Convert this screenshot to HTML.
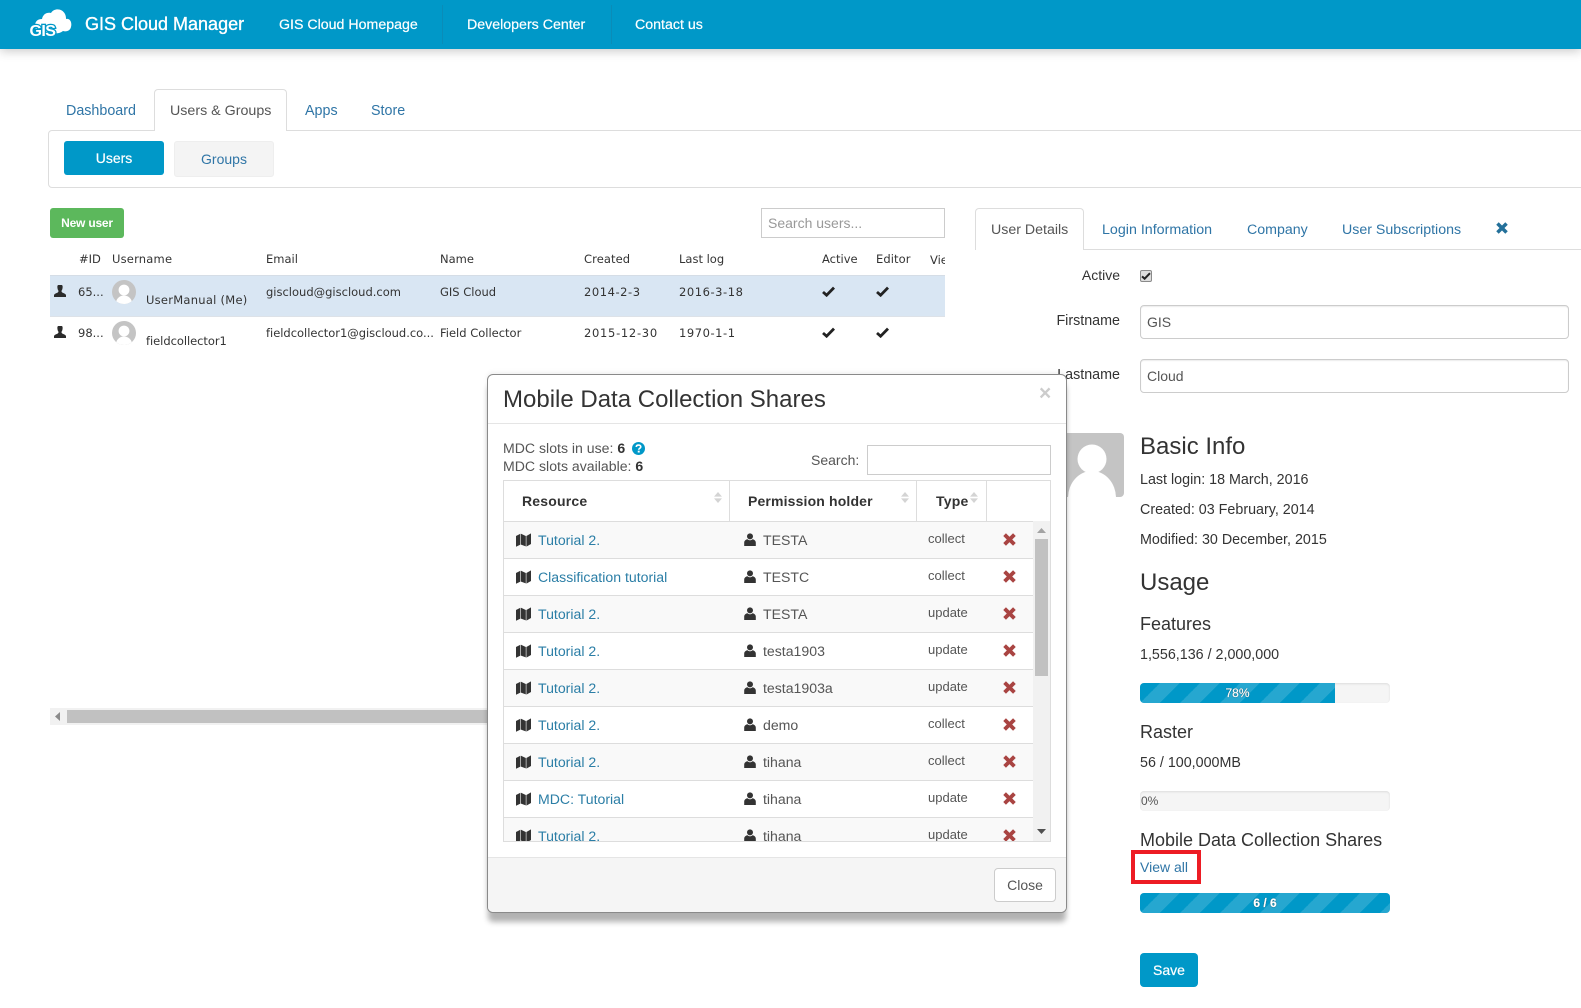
<!DOCTYPE html>
<html><head><meta charset="utf-8"><title>GIS Cloud Manager</title>
<style>
*{box-sizing:border-box}
html,body{margin:0;padding:0;background:#fff}
body{position:relative;width:1581px;height:1008px;overflow:hidden;font:14px/20px "Liberation Sans",sans-serif;color:#333}
.a{position:absolute}
.t{position:absolute;white-space:nowrap;line-height:20px}
.l{color:#2f75a6}
.n{color:#fff;font-size:14.2px;top:15px;-webkit-text-stroke:.2px #fff}
.d{font-family:"DejaVu Sans",sans-serif;font-size:11.5px;color:#333}
.v{letter-spacing:.55px}
.h{font-size:18px}
.p{font-size:14.3px}
.bar{position:absolute;left:1140px;width:250px;height:20px;background:#f5f5f5;border-radius:4px;overflow:hidden;box-shadow:inset 0 1px 2px rgba(0,0,0,.1)}
.fill{height:100%;background-color:#0098c8;background-image:linear-gradient(-45deg,rgba(255,255,255,.15) 25%,transparent 25%,transparent 50%,rgba(255,255,255,.15) 50%,rgba(255,255,255,.15) 75%,transparent 75%,transparent);background-size:40px 40px;color:#fff;text-align:center;font-size:12px;line-height:20px;text-shadow:0 0 1px #000;-webkit-text-stroke:.2px #fff}
.inp{position:absolute;background:#fff;border:1px solid #ccc;border-radius:4px;box-shadow:inset 0 1px 1px rgba(0,0,0,.08);padding-left:6px;color:#555;line-height:32px}
.row{position:absolute;left:0;width:530px;height:37px;border-top:1px solid #ddd}
.row a{position:absolute;left:34px;top:8px;color:#2b7ea6;white-space:nowrap;font-size:14.1px}
.row b{position:absolute;left:259px;top:8px;font-weight:normal;color:#555;white-space:nowrap;font-size:14.1px}
.row i{position:absolute;left:424px;top:7px;font-style:normal;font-size:13px;color:#555;white-space:nowrap}
.row svg{position:absolute}
.s1{left:12px;top:11px}.s2{left:240px;top:11px}.s3{left:499px;top:11px}
.o{background:#f9f9f9}
.th{position:absolute;top:7px;font-weight:bold;letter-spacing:.2px;white-space:nowrap;line-height:26px;font-size:14px}
</style></head><body>
<svg width="0" height="0" style="position:absolute"><defs>
<symbol id="usr" viewBox="0 0 12 13"><circle cx="6" cy="3.4" r="3"/><path d="M0.2 13V9.6C.2 7.6 2 6.3 3.6 6.2 4.3 6.9 5.1 7.2 6 7.2S7.7 6.9 8.4 6.2C10 6.3 11.8 7.6 11.8 9.6V13Z"/></symbol>
<symbol id="gly" viewBox="0 0 12 12"><path d="M4.4 0H7.6C8.4 0 8.8 1 8.6 2.6 8.4 4.4 8 5 7.6 5.6 7.4 6.4 7.6 7 8.4 7.6 10 8.4 11.6 8.8 12 10V12H0V10C.4 8.8 2 8.4 3.6 7.6 4.4 7 4.6 6.4 4.4 5.6 4 5 3.6 4.4 3.4 2.6 3.2 1 3.6 0 4.4 0Z"/></symbol>
<symbol id="map" viewBox="0 0 15 14"><path fill="#333" d="M0 3 4.4 .8V11.6L0 13.8ZM5 .8 9.8 3V13.4L5 11.6ZM10.4 3 15 .4V11L10.4 13.6Z"/></symbol>
<symbol id="x" viewBox="0 0 13 13"><path d="M1.6 1.6 11.4 11.4M11.4 1.6 1.6 11.4" fill="none" stroke="#a94442" stroke-width="3.8"/></symbol>
<symbol id="chk" viewBox="0 0 13 11"><path d="M1 6 4.6 9.2 12 1.6" fill="none" stroke="#222" stroke-width="2.8"/></symbol>
<symbol id="srt" viewBox="0 0 8 11"><path d="M4 0 8 4.6H0ZM4 11 0 6.4H8Z" fill="#d4d4d4"/></symbol>
</defs></svg>

<!-- Header -->
<div class="a" style="left:0;top:0;width:1581px;height:49px;background:#0098c8;box-shadow:0 2px 10px rgba(0,0,0,.22)"></div>
<svg class="a" style="left:28px;top:4px" width="46" height="36" viewBox="0 0 46 36">
<path fill="#fff" d="M7 22C7 17 10 15 14 15 15 10 19 8 23 9 26 4 34 4 37 10 38 12 38 14 38 15 43 14 44 20 43 23 42 27 38 28 35 27 31 30 26 30 22 28 15 29 7 28 7 22Z"/>
<text x="1.5" y="32" font-family="Liberation Sans" font-weight="bold" font-size="16" fill="#fff" stroke="#0098c8" stroke-width="2.6" paint-order="stroke" letter-spacing="-.6">GIS</text>
</svg>
<div class="t" style="left:85px;top:14px;color:#fff;font-size:18px;-webkit-text-stroke:.35px #fff">GIS Cloud Manager</div>
<div class="t n" style="left:279px">GIS Cloud Homepage</div>
<div class="a" style="left:442px;top:5px;width:1px;height:39px;background:#0a8cb8"></div>
<div class="t n" style="left:467px">Developers Center</div>
<div class="a" style="left:611px;top:5px;width:1px;height:39px;background:#0a8cb8"></div>
<div class="t n" style="left:635px">Contact us</div>

<!-- Main tabs -->
<div class="a" style="left:48px;top:130px;width:1560px;height:58px;border:1px solid #ddd;border-radius:4px"></div>
<div class="a" style="left:154px;top:89px;width:133px;height:42px;background:#fff;border:1px solid #ddd;border-bottom:0;border-radius:4px 4px 0 0"></div>
<div class="t l" style="left:66px;top:101px;font-size:14.3px">Dashboard</div>
<div class="t" style="left:170px;top:101px;font-size:14.25px;color:#555">Users &amp; Groups</div>
<div class="t l" style="left:305px;top:101px;font-size:14.3px">Apps</div>
<div class="t l" style="left:371px;top:101px;font-size:14.3px">Store</div>
<div class="a" style="left:64px;top:141px;width:100px;height:34px;background:#0098c8;border-radius:3px;color:#fff;text-align:center;line-height:34px;-webkit-text-stroke:.2px #fff">Users</div>
<div class="a" style="left:174px;top:141px;width:100px;height:36px;background:#f4f4f4;border:1px solid #eee;border-radius:3px;color:#2f75a6;text-align:center;line-height:35px">Groups</div>

<!-- Users table -->
<div class="a" style="left:50px;top:208px;width:74px;height:30px;background:#5cb85c;border-radius:3px;color:#fff;font-size:12px;font-weight:bold;letter-spacing:-.2px;text-align:center;line-height:30px">New user</div>
<div class="a" style="left:761px;top:208px;width:184px;height:30px;border:1px solid #ccc;color:#999;padding-left:6px;line-height:28px">Search users...</div>
<div class="t d" style="left:79px;top:249px">#ID</div>
<div class="t d" style="left:112px;top:249px;letter-spacing:.2px">Username</div>
<div class="t d" style="left:266px;top:249px">Email</div>
<div class="t d" style="left:440px;top:249px">Name</div>
<div class="t d" style="left:584px;top:249px;letter-spacing:.1px">Created</div>
<div class="t d" style="left:679px;top:249px">Last log</div>
<div class="t d" style="left:822px;top:249px">Active</div>
<div class="t d" style="left:876px;top:249px;letter-spacing:.1px">Editor</div>
<div class="a" style="left:930px;top:249px;width:15px;overflow:hidden"><span class="d" style="line-height:20px">View</span></div>

<div class="a" style="left:50px;top:275px;width:895px;height:42px;background:#d9e6f3;border-top:1px solid #d5dde6;border-bottom:1px solid #dde2e8"></div>

<svg class="a" style="left:54px;top:285px" width="12" height="12" fill="#2b2b2b"><use href="#gly"/></svg>
<div class="t d" style="left:78px;top:282px">65...</div>
<svg class="a" style="left:112px;top:280px" width="24" height="24" viewBox="0 0 24 24"><defs><clipPath id="c1"><circle cx="12" cy="12" r="12"/></clipPath></defs><circle cx="12" cy="12" r="12" fill="#c4c4c4"/><g clip-path="url(#c1)" fill="#fff"><circle cx="12" cy="10" r="5.4"/><ellipse cx="12" cy="23" rx="8" ry="7.5"/></g></svg>
<div class="t d" style="left:146px;top:290px;letter-spacing:.26px">UserManual (Me)</div>
<div class="t d" style="left:266px;top:282px">giscloud@giscloud.com</div>
<div class="t d" style="left:440px;top:282px">GIS Cloud</div>
<div class="t d v" style="left:584px;top:282px">2014-2-3</div>
<div class="t d v" style="left:679px;top:282px">2016-3-18</div>
<svg class="a" style="left:822px;top:286px" width="13" height="11"><use href="#chk"/></svg>
<svg class="a" style="left:876px;top:286px" width="13" height="11"><use href="#chk"/></svg>

<svg class="a" style="left:54px;top:326px" width="12" height="12" fill="#2b2b2b"><use href="#gly"/></svg>
<div class="t d" style="left:78px;top:323px">98...</div>
<svg class="a" style="left:112px;top:321px" width="24" height="24" viewBox="0 0 24 24"><defs><clipPath id="c2"><circle cx="12" cy="12" r="12"/></clipPath></defs><circle cx="12" cy="12" r="12" fill="#c4c4c4"/><g clip-path="url(#c2)" fill="#fff"><circle cx="12" cy="10" r="5.4"/><ellipse cx="12" cy="23" rx="8" ry="7.5"/></g></svg>
<div class="t d" style="left:146px;top:331px;letter-spacing:-.05px">fieldcollector1</div>
<div class="t d" style="left:266px;top:323px;letter-spacing:-.02px">fieldcollector1@giscloud.co...</div>
<div class="t d" style="left:440px;top:323px">Field Collector</div>
<div class="t d v" style="left:584px;top:323px;letter-spacing:.7px">2015-12-30</div>
<div class="t d v" style="left:679px;top:323px">1970-1-1</div>
<svg class="a" style="left:822px;top:327px" width="13" height="11"><use href="#chk"/></svg>
<svg class="a" style="left:876px;top:327px" width="13" height="11"><use href="#chk"/></svg>

<!-- Horizontal scrollbar -->
<div class="a" style="left:50px;top:708px;width:895px;height:17px;background:#f1f1f1"></div>
<div class="a" style="left:67px;top:710px;width:878px;height:13px;background:#c1c1c1"></div>
<svg class="a" style="left:55px;top:712px" width="6" height="9"><path d="M5 0V9L0 4.5Z" fill="#8a8a8a"/></svg>

<!-- Right panel -->
<div class="a" style="left:975px;top:249px;width:606px;height:1px;background:#ddd"></div>
<div class="a" style="left:975px;top:208px;width:109px;height:42px;background:#fff;border:1px solid #ddd;border-bottom:0;border-radius:4px 4px 0 0"></div>
<div class="t" style="left:991px;top:220px;color:#555;font-size:14.2px">User Details</div>
<div class="t l" style="left:1102px;top:220px;font-size:14.25px">Login Information</div>
<div class="t l" style="left:1247px;top:220px;font-size:14.2px">Company</div>
<div class="t l" style="left:1342px;top:220px;font-size:14.2px">User Subscriptions</div>
<svg class="a" style="left:1496px;top:222px" width="12" height="12" viewBox="0 0 13 13"><path d="M1.6 1.6 11.4 11.4M11.4 1.6 1.6 11.4" fill="none" stroke="#23709a" stroke-width="3.8"/></svg>

<div class="t" style="right:461px;top:265px">Active</div>
<div class="a" style="left:1140px;top:270px;width:12px;height:12px;background:#ddd;border:1px solid #8a8a8a;border-radius:2px"></div>
<svg class="a" style="left:1141px;top:272px" width="10" height="8" viewBox="0 0 13 11"><use href="#chk"/></svg>
<div class="t p" style="right:461px;top:311px">Firstname</div>
<div class="inp" style="left:1140px;top:305px;width:429px;height:34px">GIS</div>
<div class="t p" style="right:461px;top:365px">Lastname</div>
<div class="inp" style="left:1140px;top:359px;width:429px;height:34px">Cloud</div>

<svg class="a" style="left:1060px;top:433px" width="64" height="64" viewBox="0 0 64 64"><defs><clipPath id="c3"><rect width="64" height="64" rx="4"/></clipPath></defs><rect width="64" height="64" rx="4" fill="#c4c4c4"/><g clip-path="url(#c3)" fill="#fff"><circle cx="32" cy="26" r="14.5"/><ellipse cx="32" cy="65" rx="24" ry="27"/></g></svg>

<div class="t" style="left:1140px;top:437px;font-size:24px">Basic Info</div>
<div class="t p" style="left:1140px;top:470px">Last login: 18 March, 2016</div>
<div class="t p" style="left:1140px;top:500px">Created: 03 February, 2014</div>
<div class="t p" style="left:1140px;top:530px">Modified: 30 December, 2015</div>
<div class="t" style="left:1140px;top:573px;font-size:24px">Usage</div>
<div class="t h" style="left:1140px;top:614px">Features</div>
<div class="t p" style="left:1140px;top:645px">1,556,136 / 2,000,000</div>
<div class="bar" style="top:683px"><div class="fill" style="width:195px">78%</div></div>
<div class="t h" style="left:1140px;top:722px">Raster</div>
<div class="t p" style="left:1140px;top:753px">56 / 100,000MB</div>
<div class="bar" style="top:791px"><div class="a" style="left:1px;top:0;font-size:12px;color:#555">0%</div></div>
<div class="t h" style="left:1140px;top:830px">Mobile Data Collection Shares</div>
<div class="a" style="left:1131px;top:850px;width:70px;height:34px;border:4px solid #ed1c24"></div>
<div class="t l" style="left:1140px;top:857px">View all</div>
<div class="bar" style="top:893px"><div class="fill" style="width:100%;font-weight:bold">6 / 6</div></div>
<div class="a" style="left:1140px;top:953px;width:58px;height:34px;background:#0098c8;border-radius:4px;color:#fff;text-align:center;line-height:34px;-webkit-text-stroke:.2px #fff">Save</div>

<!-- Modal -->
<div class="a" style="left:487px;top:374px;width:580px;height:539px;background:#fff;border:1px solid #8a8a8a;border-radius:6px;box-shadow:0 10px 6px -1px rgba(0,0,0,.3),0 -2px 5px rgba(0,0,0,.06);overflow:hidden">
  <div class="a" style="left:0;top:482px;width:578px;height:55px;background:#f5f5f5;border-top:1px solid #e5e5e5"></div>
  <div class="a" style="left:0;top:48px;width:578px;height:1px;background:#e5e5e5"></div>
</div>
<div class="t" style="left:503px;top:390px;font-size:24px;line-height:20px">Mobile Data Collection Shares</div>
<div class="t" style="left:1039px;top:384px;font-size:21px;font-weight:bold;color:#ccc">×</div>
<div class="t" style="left:503px;top:438px;color:#555;font-size:14.1px">MDC slots in use: <b style="color:#333">6</b></div>
<svg class="a" style="left:632px;top:442px" width="13" height="13" viewBox="0 0 12 12"><circle cx="6" cy="6" r="6" fill="#0098c8"/><path d="M3.9 4.6C4 3.4 4.9 2.8 6 2.8 7.2 2.8 8.1 3.5 8.1 4.5 8.1 5.9 6.2 5.9 6.2 7.2" fill="none" stroke="#fff" stroke-width="1.5"/><rect x="5.3" y="8" width="1.8" height="1.7" fill="#fff"/></svg>
<div class="t" style="left:503px;top:456px;color:#555;font-size:14.1px">MDC slots available: <b style="color:#333">6</b></div>
<div class="t" style="left:811px;top:450px;color:#555">Search:</div>
<div class="a" style="left:867px;top:445px;width:184px;height:30px;border:1px solid #ccc"></div>

<!-- Modal table -->
<div class="a" style="left:503px;top:480px;width:548px;height:362px;border:1px solid #ddd;overflow:hidden;background:#fff">
  <div class="th" style="left:18px">Resource</div>
  <div class="th" style="left:244px;letter-spacing:.15px">Permission holder</div>
  <div class="th" style="left:432px">Type</div>
  <div class="a" style="left:225px;top:0;width:1px;height:40px;background:#ddd"></div>
  <div class="a" style="left:412px;top:0;width:1px;height:40px;background:#ddd"></div>
  <div class="a" style="left:482px;top:0;width:1px;height:40px;background:#ddd"></div>
  <svg class="a" style="left:210px;top:11px" width="8" height="11"><use href="#srt"/></svg>
  <svg class="a" style="left:397px;top:11px" width="8" height="11"><use href="#srt"/></svg>
  <svg class="a" style="left:466px;top:11px" width="8" height="11"><use href="#srt"/></svg>

  <div class="row o" style="top:40px"><svg class="s1" width="15" height="14"><use href="#map"/></svg><a>Tutorial 2.</a><svg class="s2" width="12" height="13" fill="#333"><use href="#usr"/></svg><b>TESTA</b><i>collect</i><svg class="s3" width="13" height="13"><use href="#x"/></svg></div>
  <div class="row" style="top:77px"><svg class="s1" width="15" height="14"><use href="#map"/></svg><a>Classification tutorial</a><svg class="s2" width="12" height="13" fill="#333"><use href="#usr"/></svg><b>TESTC</b><i>collect</i><svg class="s3" width="13" height="13"><use href="#x"/></svg></div>
  <div class="row o" style="top:114px"><svg class="s1" width="15" height="14"><use href="#map"/></svg><a>Tutorial 2.</a><svg class="s2" width="12" height="13" fill="#333"><use href="#usr"/></svg><b>TESTA</b><i>update</i><svg class="s3" width="13" height="13"><use href="#x"/></svg></div>
  <div class="row" style="top:151px"><svg class="s1" width="15" height="14"><use href="#map"/></svg><a>Tutorial 2.</a><svg class="s2" width="12" height="13" fill="#333"><use href="#usr"/></svg><b>testa1903</b><i>update</i><svg class="s3" width="13" height="13"><use href="#x"/></svg></div>
  <div class="row o" style="top:188px"><svg class="s1" width="15" height="14"><use href="#map"/></svg><a>Tutorial 2.</a><svg class="s2" width="12" height="13" fill="#333"><use href="#usr"/></svg><b>testa1903a</b><i>update</i><svg class="s3" width="13" height="13"><use href="#x"/></svg></div>
  <div class="row" style="top:225px"><svg class="s1" width="15" height="14"><use href="#map"/></svg><a>Tutorial 2.</a><svg class="s2" width="12" height="13" fill="#333"><use href="#usr"/></svg><b>demo</b><i>collect</i><svg class="s3" width="13" height="13"><use href="#x"/></svg></div>
  <div class="row o" style="top:262px"><svg class="s1" width="15" height="14"><use href="#map"/></svg><a>Tutorial 2.</a><svg class="s2" width="12" height="13" fill="#333"><use href="#usr"/></svg><b>tihana</b><i>collect</i><svg class="s3" width="13" height="13"><use href="#x"/></svg></div>
  <div class="row" style="top:299px"><svg class="s1" width="15" height="14"><use href="#map"/></svg><a>MDC: Tutorial</a><svg class="s2" width="12" height="13" fill="#333"><use href="#usr"/></svg><b>tihana</b><i>update</i><svg class="s3" width="13" height="13"><use href="#x"/></svg></div>
  <div class="row o" style="top:336px"><svg class="s1" width="15" height="14"><use href="#map"/></svg><a>Tutorial 2.</a><svg class="s2" width="12" height="13" fill="#333"><use href="#usr"/></svg><b>tihana</b><i>update</i><svg class="s3" width="13" height="13"><use href="#x"/></svg></div>

  <div class="a" style="left:529px;top:40px;width:17px;height:320px;background:#f1f1f1"></div>
  <div class="a" style="left:531px;top:58px;width:13px;height:137px;background:#c1c1c1"></div>
  <svg class="a" style="left:533px;top:47px" width="9" height="5"><path d="M4.5 0 9 5H0Z" fill="#a3a3a3"/></svg>
  <svg class="a" style="left:533px;top:348px" width="9" height="5"><path d="M0 0H9L4.5 5Z" fill="#505050"/></svg>
</div>
<div class="a" style="left:994px;top:868px;width:62px;height:34px;background:#fff;border:1px solid #ccc;border-radius:4px;color:#555;text-align:center;line-height:33px">Close</div>
</body></html>
